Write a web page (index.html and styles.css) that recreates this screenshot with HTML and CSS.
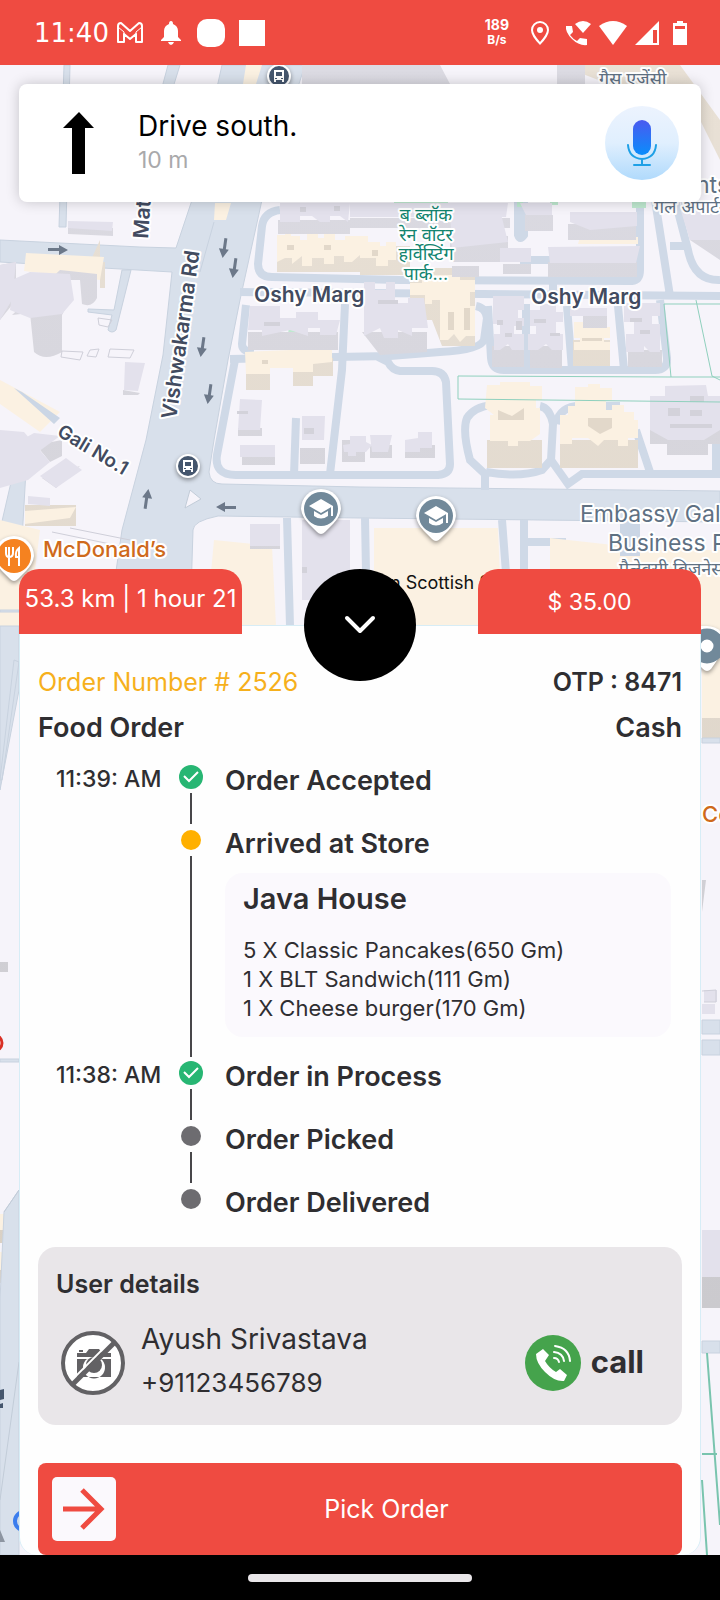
FILE: index.html
```
<!DOCTYPE html>
<html lang="en">

<head>
    <meta charset="UTF-8">
    <meta name="viewport" content="width=device-width, initial-scale=1.0">
    <title>Order Delivery</title>
    <link rel="stylesheet" href="styles.css">
</head>

<body>
    <header class="status-bar">
        <div class="status-left">
            <span class="clock">11:40</span>
            <svg width="26" height="22" viewBox="0 0 26 22" fill="none" stroke="#fff" stroke-width="2" stroke-linejoin="round">
                <path d="M1 20V4Q1 1 4 1L13 9L22 1Q25 1 25 4V20H19V12L13 17L7 12V20Z" />
                <path d="M1 5L7 10V12M25 5L19 10V12" stroke-width="1" />
            </svg>
            <svg class="bell" width="20" height="24" viewBox="0 0 20 24" fill="#fff">
                <path d="M10 0Q12 0 12 3Q17 5 17 10V16L20 19V20H0V19L3 16V10Q3 5 8 3Q8 0 10 0ZM7 21H13Q12 24 10 24Q8 24 7 21Z" />
            </svg>
            <span class="app-dot"></span>
            <span class="app-square"></span>
        </div>
        <div class="status-right">
            <span class="speed">189<br><small>B/s</small></span>
            <svg class="location" width="18" height="24" viewBox="0 0 18 24" fill="#fff">
                <path fill-rule="evenodd" d="M9 0A9 9 0 0 1 18 9Q18 15 9 24Q0 15 0 9A9 9 0 0 1 9 0ZM9 2A7 7 0 0 0 2 9Q2 13 9 21Q16 13 16 9A7 7 0 0 0 9 2Z" />
                <circle cx="9" cy="9" r="3" />
            </svg>
            <svg width="26" height="26" viewBox="0 0 26 26" fill="#fff">
                <path d="M1 6H7L8 12L5 15Q8 19 12 21L15 18L22 19V25Q14 26 7 19Q0 12 1 6Z" />
                <path d="M10 4Q18 -2 26 4L18 13Z" />
            </svg>
            <svg width="28" height="24" viewBox="0 0 28 24" fill="#fff">
                <path d="M0 5Q14 -5 28 5L14 24Z" />
            </svg>
            <svg width="24" height="24" viewBox="0 0 24 24" fill="#fff">
                <path fill-rule="evenodd" d="M24 0V24H0ZM18 9V22H22V9Z" />
            </svg>
            <svg class="battery" width="14" height="24" viewBox="0 0 14 24" fill="#fff">
                <path fill-rule="evenodd" d="M4 0H10V2H14V24H0V2H4ZM2 5V8H12V5Z" />
            </svg>
        </div>
    </header>

    <main class="map-area">
        <svg class="map" viewBox="0 65 720 1490" preserveAspectRatio="xMidYMin slice" aria-hidden="true">
            <defs>
                <linearGradient id="wall" x1="0" y1="0" x2="0" y2="1">
                    <stop offset="0" stop-color="#dcdbe3" />
                    <stop offset="1" stop-color="#cbcace" />
                </linearGradient>
                <linearGradient id="sand" x1="0" y1="0" x2="0" y2="1">
                    <stop offset="0" stop-color="#e9e1d6" />
                    <stop offset="1" stop-color="#d9d0c4" />
                </linearGradient>
                <g id="school">
                    <path class="pin" d="M0 -20A20 20 0 0 1 20 0Q19 8 12 15L4 23Q0 27 -4 23L-12 15Q-19 8 -20 0A20 20 0 0 1 0 -20Z" />
                    <circle r="17" fill="#71899a" />
                    <path fill="#fff" d="M0 -10L12 -3L0 4L-12 -3ZM-7 2L0 6L7 2V7Q0 12 -7 7ZM10 -3H12V7H10Z" />
                </g>
                <g id="bus">
                    <circle class="pin" r="12" />
                    <circle r="10" fill="#45566d" />
                    <path fill="#fff" fill-rule="evenodd" d="M-5 -6H5V6H3V4H-3V6H-5ZM-3 -4V0H3V-4ZM-4 2H-2V3H-4ZM2 2H4V3H2Z" />
                </g>
                <path id="arrow" fill="#6c7889" d="M-1 -10H2V1H5L0 10L-5 1H-1Z" />
            </defs>

            <rect y="65" width="720" height="1490" fill="#f6f4fa" />

            <!-- main roads -->
            <g class="road">
                <path d="M0 240L140 247L176 248L192 200L222 65H305L262 200L240 300L228 360L214 440L209 472Q210 484 222 484L360 487L720 491V522L360 518L218 516Q193 521 193 530L190 626H108L122 530L146 440L163 355L172 272L0 262Z" />
                <path d="M64 65H70L66 227H59ZM168 65H180L166 110H156Z" />
                <path d="M131 270H122L114 310L88 309V312L112 315L108 330Q112 334 116 330Z" />
                <path d="M15 465L26 470L22 540L0 560V530Z" />
                <path fill="none" d="M214 222L200 272" />
            </g>

            <!-- streets between the blocks -->
            <g class="street">
                <path d="M280 210Q264 212 262 226L258 264Q258 277 272 277L400 280L632 281Q640 280 640 270V200" />
                <path d="M518 200V235Q520 241 524 235V200M553 280V296M520 260H555M240 292L720 296M655 200L670 296M675 200L688 250Q694 281 720 280M670 246H690" />
                <path d="M246 305L242 344Q242 352 254 352M230 359L390 356L440 352Q480 350 484 340L487 318Q486 308 476 306" />
                <path d="M345 304L342 370L330 474M235 360L217 455Q214 475 236 475L438 475Q450 474 450 464L446 382Q444 371 432 371H400Q392 370 388 362L378 357M296 418L294 475" />
                <path d="M488 306L491 358Q492 370 504 370H655Q668 370 667 358L660 300M526 304V370M567 306L572 370M618 306L624 370" />
                <path d="M485 490V474L470 460Q462 430 467 418Q474 407 492 405M486 472Q520 478 542 470L551 460L553 424Q550 408 540 406M556 424Q560 406 580 406H620M551 460L568 484L582 474H720M636 430L650 472M716 440V474" />
                <path d="M287 518L290 626M365 518L367 626M502 520L510 626M524 520V626M524 542H566" />
            </g>

            <!-- cream buildings -->
            <path fill="url(#sand)" d="M277 250H360V272H277ZM360 246H410V275H360ZM410 268H475V346H442L432 320H410ZM246 360H270V390H246ZM293 360H313V386H293ZM313 358H333V376H313ZM573 340H610V366H573ZM487 440H542V468H487ZM560 440H638V468H560ZM25 505H76V526H25ZM100 240V288H105V262H90ZM422 611H453V625H422ZM560 65H680L720 120V160L700 120ZM0 1230H15V1243H0ZM0 1270H14V1283H0ZM702 718H720V738H702Z" />
            <path fill="#fbf1e2" d="M277 235H285V230H291V236H300V240H307V232H318V238H324V232H335V240H345V236H360V255L352 262H344V256H334V264H324V258H312V266H302V256L292 264V258H285L277 262ZM360 236H368V242H380V246H386V242H396V260H388V266H376V258H360ZM410 283H422V275H460V280H475V292H470V306H475V336H466L460 342L454 334L448 340H440V300H432V304H425V295H410ZM245 352L290 350V340H298V350H332V362L313 364V372H293V368H270V374H246ZM574 322H591V327H610V338H604V342H610V350H574V342H580V338H574ZM580 237H638V244H578ZM487 385H500V382H530V386H542V400H536V408H540V434L530 441H518V446H508V441H490V415H494L485 408ZM575 387H588V384H600V388H612V400H606V410H612V405H624V412H634V420H638V438H628V446H618V440H604L598 446L588 438H572V444H560V415H568V406H575ZM26 253L104 257L100 280L24 271ZM0 380L60 412L40 432L0 404ZM25 511L76 507L70 518L25 524ZM0 520L40 530L28 626H0ZM214 540L272 546L276 626H206ZM374 528H498L502 626H374ZM550 538L640 548V600H550ZM570 550H720V626H570ZM702 626H720V718H702ZM246 65H262L256 84H243ZM0 1214H15V1230H0ZM0 1252H14V1270H0ZM215 203H231L226 220H214Z" />
            <path fill="#bfe9d0" d="M289 318H302L298 340H288ZM394 200H448V206H394ZM517 200H523V207H517ZM550 200H558V205H550ZM632 200H646V208H632Z" />

            <!-- grey buildings -->
            <path fill="url(#wall)" d="M0 265L16 262V300L0 320ZM12 315L30 313L34 352Q45 362 62 352V315L70 300V280H80L82 304Q92 308 97 298V274L60 270ZM68 228H113V236L68 234ZM123 390L140 393L138 395H123ZM278 220H350V234H278ZM350 218H510V228H350ZM450 236H508V262H450ZM525 215H553V231H525ZM568 224H636V240H568ZM548 262H637V277H548ZM503 264H531V274H503ZM452 266H479V277H452ZM248 332H338V350H248ZM362 332H427V352L380 355ZM492 346H524V367H492ZM530 346H562V368H530ZM583 312H607V328H583ZM628 350H662V367H628ZM238 428H262V436H238ZM342 440H365V462H342ZM370 445H392V458H370ZM405 445H435V458H405ZM300 448H325V464H300ZM242 455H275V465H242ZM650 430H720V444H708V455H667V444H650ZM250 545H280V549H250ZM325 542H347V554H325ZM302 65H440L450 84H302ZM557 65H585V84H557ZM680 200H720V260L690 240ZM0 962H8V972H0ZM702 880L706 880L702 912ZM702 1277H720V1308H702ZM36 445L50 462L62 456V440ZM42 478L56 488L80 466Z" />
            <path fill="#e3e1ec" d="M14 279L30 272L70 274L74 300L62 314L30 318L10 310ZM68 221L113 222L112 231L68 228ZM125 362L145 363L138 391L124 390ZM280 203H350L348 222L340 216H330V222H320L312 216H300V222H280ZM350 203H508L506 217H350ZM450 212L500 210L508 242L452 248ZM520 203H552V215H526ZM570 212H637V226L590 230L570 222ZM548 247L640 246L636 263H550ZM500 248H531V262H500ZM250 306H280V318H296V312H318V320H340L336 335H320V328H308V336L290 330L262 336V330H248ZM364 282H375V290H386V282H395V303H408V298H424L428 328H412V336L398 330V338H384L380 328L364 336ZM493 296H524V310H518V318H524V326H514V334H524V350H512L508 344L500 350H494V334H500V324H493ZM530 310H540V304H556V312H563V322H556V334H563V350H552L546 344L538 350H528V334H536V326H530ZM570 308H607V316H570ZM624 303H660V316H652V324H660V352H650L644 346V352H626V334H634V322H624ZM240 399L262 400L260 430H238ZM302 416H325L324 440H302ZM343 445L350 444V436H366V442L372 445L366 452H356V456H348V452H344ZM370 435H392L388 452H372ZM405 440L418 438V432H432V448H420V452H405ZM240 445H275V457H240ZM665 386L706 385L708 396H720V430L704 440H668L650 430V396H665ZM250 524H280V546H250ZM302 520H350V600H302ZM680 208H720V240H690ZM0 265L16 262L12 300L0 320ZM0 430L24 432L50 462L28 480L0 488ZM16 443L34 433L60 436L38 452ZM40 476L66 458L82 470L56 488ZM28 496L50 498L50 506L28 504ZM702 1230H720V1277H702ZM704 990H717V1002H704ZM702 1004H715V1014H702Z" />
            <path fill="#d3d2da" d="M497 320H503V325H497ZM516 321H522V330H516ZM505 333H512V337H505ZM534 319H546V323H534ZM550 333H560V336H550ZM630 318H642V322H630ZM640 330H650V334H640ZM668 408H680V416H668ZM690 396H704V402H690ZM690 410H702V416H690ZM670 424H712V428H670ZM300 207H306V212H300ZM334 206H340V211H334ZM264 322H280V326H264ZM378 300H398V304H378ZM237 411H248V414H237ZM304 428H314V434H304ZM302 567H307V573H302Z" />
            <path fill="#e2d8ca" d="M287 245H294V250H287ZM324 245H331V250H324ZM372 250H378V256H372ZM498 410L512 416L524 408V420H498ZM588 418H612V428L600 434L588 426ZM448 312H454V330H448ZM464 308H470V330H464ZM262 360H268V364H262ZM582 338H602V341H582Z" />
            <path fill="none" stroke="#cfcfd9" d="M62 351L83 352L80 360L61 357ZM90 350L99 349L96 357L87 356ZM110 349L134 350L130 358L108 357ZM98 318L112 320L108 327L99 325ZM52 532L120 546M70 528L130 540M702 991L716 990V1002H704" />
            <path fill="#cbd6e5" d="M14 388L22 392L60 418L54 424ZM620 520H640V556H620Z" />

            <!-- park outlines -->
            <path fill="none" stroke="#8fd0bd" d="M458 376L671 377L664 304M458 376V399L720 402M671 377H720M696 300L712 376L720 380M664 304H720" />

            <!-- strips on both sides of the order sheet -->
            <path class="road" d="M0 610H19V612H0ZM0 626H19V690L0 790ZM14 660L19 662L2 780H0ZM0 1059H19V1062H0ZM19 1190L4 1212L0 1300V1555H19ZM702 738H720V743H702ZM702 1020H720V1034H702ZM702 1040H720V1055H702ZM702 1341H720V1353H702Z" />
            <path fill="none" stroke="#c2ccd8" d="M19 1362L0 1500M19 1190L4 1212" />
            <path fill="none" stroke="#79c4ae" stroke-width="2" d="M702 1454H717M707 1353L720 1525M702 1480L707 1555" />

            <use href="#arrow" transform="translate(58 250) rotate(-90)" />
            <use href="#arrow" transform="translate(224 248) rotate(8)" />
            <use href="#arrow" transform="translate(234 268) rotate(8)" />
            <use href="#arrow" transform="translate(202 347) rotate(8)" />
            <use href="#arrow" transform="translate(209 394) rotate(8)" />
            <use href="#arrow" transform="translate(147 499) rotate(188)" />
            <use href="#arrow" transform="translate(226 507) rotate(90)" />
            <path fill="#f6f4fa" stroke="#c2ccd8" d="M190 490L201 499L185 508Z" />

            <g class="label">
                <text x="254" y="302">Oshy Marg</text>
                <text x="531" y="304">Oshy Marg</text>
                <text transform="translate(176 420) rotate(-82)">Vishwakarma Rd</text>
                <text transform="translate(148 239) rotate(-86)">Mat</text>
                <text class="lane" transform="translate(56 435) rotate(31)">Gali No.1</text>
            </g>
            <g class="label park">
                <text x="426" y="221">ब ब्लॉक</text>
                <text x="426" y="241">रेन वॉटर</text>
                <text x="426" y="260">हार्वेस्टिंग</text>
                <text x="426" y="280">पार्क...</text>
            </g>
            <g class="label place">
                <text x="580" y="522">Embassy Gala</text>
                <text x="608" y="551">Business P</text>
                <text class="hindi" x="619" y="575">पैलेक्सी बिजनेस</text>
                <text class="hindi" x="599" y="85">गैस एजेंसी</text>
                <text class="hindi" x="654" y="213">गेल अपार्टमें</text>
                <text x="696" y="193">nts</text>
            </g>
            <text class="label food" x="43" y="557">McDonald’s</text>
            <text class="label food" x="702" y="822">Co</text>
            <text class="label school" x="390" y="589">n Scottish S</text>

            <use href="#bus" transform="translate(279 76)" />
            <use href="#bus" transform="translate(188 466)" />
            <use href="#school" transform="translate(321 509)" />
            <use href="#school" transform="translate(436 516)" />
            <g transform="translate(14 556)">
                <path class="pin" d="M0 -20A20 20 0 0 1 20 0Q19 8 12 15L4 23Q0 27 -4 23L-12 15Q-19 8 -20 0A20 20 0 0 1 0 -20Z" />
                <circle r="17" fill="#f58220" />
                <path fill="none" stroke="#fff" stroke-width="2" d="M-8 -9V-3Q-8 1 -5 1Q-1 1 -1 -3V-9M-5 -9V10M5 10V-8Q1 -5 2 1H5" />
            </g>
            <path class="pin" d="M707 626A20 20 0 0 1 727 646L711 669Q707 673 703 669L695 661V626Z" />
            <circle cx="707" cy="646" r="12" fill="none" stroke="#71899a" stroke-width="11" />
            <circle cx="-6" cy="1043" r="8" fill="#fff" stroke="#d93025" stroke-width="3" />
            <circle cx="24" cy="1521" r="9" fill="none" stroke="#3b7ded" stroke-width="4" />
            <path fill="#8d95a1" d="M0 1530L5 1542H0Z" />
            <path fill="#45566d" d="M0 1390L4 1389V1399L0 1400ZM0 1404L3 1403V1408H0Z" />
        </svg>

        <section class="direction">
            <svg class="up-arrow" width="32" height="62" viewBox="0 0 32 62">
                <path d="M16 0L31 16H22V62H9V16H0Z" />
            </svg>
            <div class="direction-text">
                <h1>Drive south.</h1>
                <p>10 m</p>
            </div>
            <button class="mic" aria-label="Voice">
                <svg width="30" height="46" viewBox="0 0 30 46" fill="none" stroke="#1ea0e6" stroke-width="2" stroke-linecap="round">
                    <defs>
                        <linearGradient id="micFill" x1="0" y1="0" x2="0" y2="1">
                            <stop offset="0" stop-color="#4a5af0" />
                            <stop offset="1" stop-color="#0a8dfb" />
                        </linearGradient>
                    </defs>
                    <rect x="6" y="0" width="18" height="35" rx="9" fill="url(#micFill)" stroke="none" />
                    <path d="M1 25Q2 38 15 39Q28 38 29 25M15 39V44M7 45H23" />
                </svg>
            </button>
        </section>

        <section class="order">
            <div class="tabs">
                <div class="tab distance">53.3 km | 1 hour 21</div>
                <button class="toggle" aria-label="Collapse">
                    <svg width="32" height="20" viewBox="0 0 32 20" fill="none" stroke="#fff" stroke-width="4" stroke-linecap="round" stroke-linejoin="round">
                        <path d="M3 3L16 16L29 3" />
                    </svg>
                </button>
                <div class="tab price">$ 35.00</div>
            </div>

            <div class="sheet">
                <div class="info-row">
                    <span class="order-number">Order Number # 2526</span>
                    <span>OTP : 8471</span>
                </div>
                <div class="info-row order-type">
                    <span>Food Order</span>
                    <span>Cash</span>
                </div>

                <ol class="timeline">
                    <li>
                        <time>11:39: AM</time>
                        <div class="track">
                            <span class="dot done"><svg width="16" height="12" viewBox="0 0 16 12" fill="none" stroke="#fff" stroke-width="2"><path d="M1 5L6 10L15 1" /></svg></span>
                        </div>
                        <h2>Order Accepted</h2>
                    </li>
                    <li>
                        <time></time>
                        <div class="track"><span class="dot current"></span></div>
                        <div class="step">
                            <h2>Arrived at Store</h2>
                            <div class="store">
                                <h3>Java House</h3>
                                <p>5 X Classic Pancakes(650 Gm)</p>
                                <p>1 X BLT Sandwich(111 Gm)</p>
                                <p>1 X Cheese burger(170 Gm)</p>
                            </div>
                        </div>
                    </li>
                    <li>
                        <time>11:38: AM</time>
                        <div class="track">
                            <span class="dot done"><svg width="16" height="12" viewBox="0 0 16 12" fill="none" stroke="#fff" stroke-width="2"><path d="M1 5L6 10L15 1" /></svg></span>
                        </div>
                        <h2>Order in Process</h2>
                    </li>
                    <li>
                        <time></time>
                        <div class="track"><span class="dot"></span></div>
                        <h2>Order Picked</h2>
                    </li>
                    <li>
                        <time></time>
                        <div class="track"><span class="dot"></span></div>
                        <h2>Order Delivered</h2>
                    </li>
                </ol>

                <div class="user">
                    <h3>User details</h3>
                    <div class="user-row">
                        <svg class="avatar" width="64" height="64" viewBox="0 0 64 64">
                            <circle cx="32" cy="32" r="30" fill="#fff" stroke="#626164" stroke-width="4" />
                            <path fill="#626164" fill-rule="evenodd" d="M16 22H25L28 18H38L41 22H50V26H16ZM18 19H22V21H18ZM16 28H26A11 11 0 1 0 40 28H50V46H16Z" />
                            <circle cx="33" cy="34" r="8" fill="#626164" />
                            <path stroke="#fff" stroke-width="2" d="M11 49L49 11" />
                            <path stroke="#626164" stroke-width="5" d="M12 53L53 12" />
                        </svg>
                        <div class="user-text">
                            <p class="user-name">Ayush Srivastava</p>
                            <p>+91123456789</p>
                        </div>
                        <a class="call" href="tel:+91123456789">
                            <svg width="56" height="56" viewBox="0 0 56 56">
                                <circle cx="28" cy="28" r="28" fill="#45a34c" />
                                <path fill="#fff" d="M11 19L18 14L24 20L20 26Q24 33 31 37L35 34L42 40L39 46Q30 47 20 37Q11 28 11 19Z" />
                                <path fill="none" stroke="#fff" stroke-width="2" stroke-linecap="round" d="M29 23Q33 23 34 27M29 17Q38 18 39 26M30 11Q44 13 45 26" />
                            </svg>
                            <span>call</span>
                        </a>
                    </div>
                </div>

                <button class="pick">
                    <span class="pick-icon">
                        <svg width="42" height="42" viewBox="0 0 42 42" fill="none" stroke="#ef4b41" stroke-width="5">
                            <path d="M0 21H38M19 2L38 21L19 40" />
                        </svg>
                    </span>
                    <span class="pick-text">Pick Order</span>
                </button>
            </div>
        </section>
    </main>

    <footer class="nav-bar"><span></span></footer>
</body>

</html>
```
FILE: styles.css
```
* {
    box-sizing: border-box;
    margin: 0;
    padding: 0;
}

body {
    min-height: 100vh;
    display: flex;
    flex-direction: column;
    font-family: Inter, "Open Sans", sans-serif;
    color: #2f2e31;
    background-color: #000;
}

button {
    border: none;
    font-family: inherit;
    cursor: pointer;
}

.status-bar {
    height: 65px;
    padding: 0 33px 0 34px;
    display: flex;
    justify-content: space-between;
    align-items: center;
    color: white;
    background-color: #ef4b41;
}

.status-left,
.status-right {
    display: flex;
    align-items: center;
}

.status-left {
    gap: 14px;
}

.status-right {
    gap: 8px;
}

.clock {
    margin-right: -6px;
    font-family: "DejaVu Sans", sans-serif;
    font-size: 26px;
}

.bell {
    margin: 0 2px 0 4px;
}

.app-dot {
    width: 28px;
    height: 28px;
    border-radius: 10px;
    background-color: white;
}

.app-square {
    width: 26px;
    height: 26px;
    background-color: white;
}

.speed {
    margin-right: 14px;
    font-size: 14px;
    line-height: 14px;
    font-weight: 700;
    text-align: center;
}

.speed small {
    font-size: 12px;
}

.location {
    margin-right: 8px;
}

.battery {
    margin-left: 6px;
}

.map-area {
    flex: 1;
    position: relative;
    display: flex;
    flex-direction: column;
}

/* map lies under everything else */
.map {
    position: absolute;
    top: 0;
    left: 0;
    width: 100%;
    height: 100%;
}

.road {
    fill: #d8e0eb;
    stroke: #c8d2df;
    stroke-width: 1;
}

.street {
    fill: none;
    stroke: #cfd9e7;
    stroke-width: 8;
}

.pin {
    fill: white;
    filter: drop-shadow(0 2px 2px rgba(0, 0, 0, 0.4));
}

.label {
    font-family: Inter, "Noto Sans", sans-serif;
    font-size: 21px;
    font-weight: 600;
    fill: #424b60;
    stroke: white;
    stroke-width: 4px;
    stroke-linejoin: round;
    paint-order: stroke;
}

.lane {
    font-size: 19px;
}

.park {
    font-size: 18px;
    font-weight: 400;
    fill: #12846f;
    text-anchor: middle;
}

.place {
    font-size: 23px;
    font-weight: 400;
    fill: #5f7183;
}

.hindi {
    font-size: 18px;
}

.food {
    font-size: 22px;
    font-weight: 500;
    fill: #cf6a1c;
}

.school {
    font-size: 18px;
    font-weight: 400;
    fill: #111;
    stroke: none;
}

.direction {
    position: relative;
    margin: 19px 19px 0;
    height: 118px;
    padding: 0 22px 0 44px;
    display: flex;
    align-items: center;
    border-radius: 8px;
    background-color: white;
    box-shadow: 0 0 14px rgba(0, 0, 0, 0.2);
}

.direction-text {
    flex: 1;
    margin-left: 43px;
    padding-bottom: 4px;
}

.direction h1 {
    font-size: 28px;
    line-height: 38px;
    font-weight: 400;
    color: black;
}

.direction p {
    font-size: 23px;
    line-height: 30px;
    color: #a9a9ab;
}

.mic {
    width: 74px;
    height: 74px;
    display: flex;
    justify-content: center;
    align-items: center;
    border-radius: 50%;
    background: linear-gradient(#ecf3fe, #e0effe 50%, #b0dafc);
}

.order {
    position: relative;
    margin: auto 19px 0;
}

.tabs {
    position: relative;
    z-index: 1;
    height: 56px;
    display: flex;
    justify-content: space-between;
    align-items: flex-start;
}

.tab {
    width: 223px;
    height: 65px;
    line-height: 66px;
    border-radius: 20px 20px 0 0;
    text-align: center;
    font-size: 23px;
    color: white;
    background-color: #ef4b41;
}

.distance {
    line-height: 60px;
    font-size: 24px;
    white-space: nowrap;
}

.toggle {
    width: 112px;
    height: 112px;
    display: flex;
    justify-content: center;
    align-items: center;
    border-radius: 50%;
    background-color: black;
}

.sheet {
    padding: 34px 18px 0;
    border: 1px solid #d7edf6;
    border-bottom: none;
    border-radius: 0 0 18px 18px;
    background-color: #fefefe;
}

.info-row {
    height: 45px;
    line-height: 45px;
    display: flex;
    justify-content: space-between;
    font-size: 25px;
    font-weight: 600;
}

.order-type {
    font-size: 27px;
}

.order-number {
    font-weight: 400;
    color: #f6b01c;
}

.timeline {
    margin-top: 13px;
    list-style: none;
}

.timeline li {
    min-height: 63px;
    display: flex;
}

.timeline li:last-child {
    min-height: 62px;
}

.timeline time {
    width: 124px;
    padding-left: 18px;
    line-height: 32px;
    font-size: 23px;
    font-weight: 500;
    white-space: nowrap;
}

.track {
    width: 58px;
    display: flex;
    flex-direction: column;
    align-items: center;
}

.track::after {
    content: "";
    flex: 1;
    width: 2px;
    margin: 2px 0;
    background-color: #48474a;
}

.timeline li:last-child .track::after {
    display: none;
}

.dot {
    width: 20px;
    height: 20px;
    margin: 4px 0;
    display: flex;
    justify-content: center;
    align-items: center;
    border-radius: 50%;
    background-color: #6d6c70;
}

.current {
    background-color: #ffb000;
}

.done {
    width: 24px;
    height: 24px;
    margin: 2px 0;
    background-color: #27b673;
}

.timeline h2 {
    line-height: 36px;
    font-size: 27px;
    font-weight: 600;
}

.timeline h2,
.step {
    flex: 1;
    padding-left: 5px;
}

.step h2 {
    padding-left: 0;
}

.store {
    margin: 11px 11px 22px 0;
    padding: 8px 18px 14px;
    border-radius: 18px;
    background-color: #fbf9fd;
}

.store h3 {
    margin-bottom: 19px;
    line-height: 36px;
    font-size: 29px;
    font-weight: 600;
}

.store p {
    line-height: 29px;
    font-size: 22px;
}

.user {
    height: 178px;
    padding: 18px;
    border-radius: 18px;
    background-color: #e9e6e9;
}

.user h3 {
    line-height: 38px;
    font-size: 25px;
    font-weight: 600;
}

.user-row {
    margin-top: 15px;
    padding: 0 20px 0 5px;
    display: flex;
    align-items: center;
}

.user-text {
    flex: 1;
    margin-left: 16px;
    padding-bottom: 4px;
}

.user-text p {
    line-height: 43px;
    font-size: 26px;
}

.user-text .user-name {
    font-size: 28px;
}

.call {
    display: flex;
    align-items: center;
    gap: 10px;
    font-size: 31px;
    font-weight: 700;
    color: #2f2e31;
    text-decoration: none;
}

.call span {
    padding-bottom: 4px;
}

.pick {
    width: 100%;
    height: 92px;
    margin-top: 38px;
    padding: 14px;
    display: flex;
    align-items: center;
    border-radius: 8px;
    color: white;
    background-color: #ef4b41;
}

.pick-icon {
    width: 64px;
    height: 64px;
    display: flex;
    justify-content: center;
    align-items: center;
    border-radius: 5px;
    background-color: #fbf9fd;
}

.pick-text {
    flex: 1;
    padding-right: 11px;
    font-size: 25px;
}

.nav-bar {
    height: 45px;
    display: flex;
    justify-content: center;
    align-items: center;
    background-color: black;
}

.nav-bar span {
    width: 224px;
    height: 8px;
    border-radius: 4px;
    background-color: #e9e6e9;
}
```
